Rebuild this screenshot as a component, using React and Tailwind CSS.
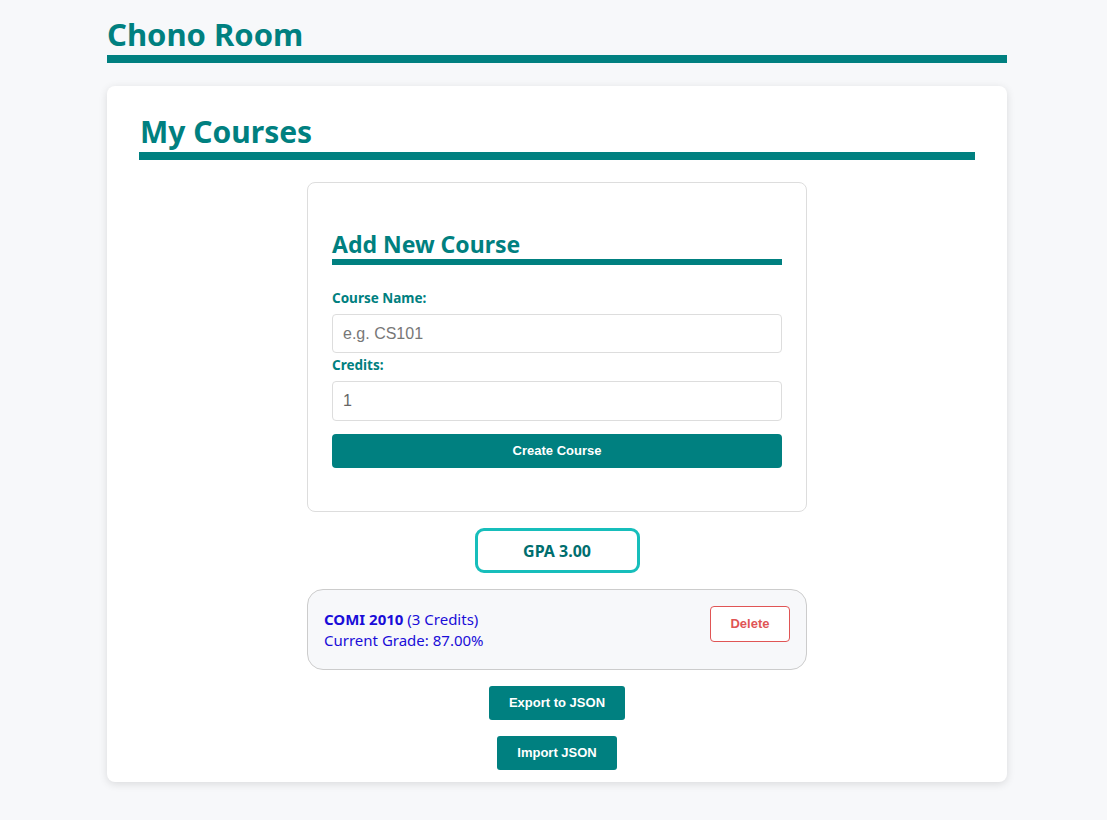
import React, { useState } from 'react';

const font = 'font-["Noto_Sans","Open_Sans",sans-serif]';
const arial = 'font-["Liberation_Sans",Arial,sans-serif]';

const App = () => {
    const [name, setName] = useState('');
    const [credits, setCredits] = useState('1');
    const courses = [{ id: 1, name: 'COMI 2010', credits: 3, grade: 87 }];

    return (
        <div className={`min-h-screen bg-[#f7f8fa] ${font}`}>
            <div className="w-[900px] ml-[107px] pt-[14px] pb-[38px]">
                <h1 className="text-[31px] leading-[40px] font-bold text-[#008080] border-b-[8px] border-[#008080] pb-[1px]">
                    Chono Room
                </h1>

                <div className="mt-[23px] bg-white rounded-lg shadow-[0_2px_8px_rgba(0,0,0,0.12)] px-8 pt-[26px] pb-[12px]">
                    <h2 className="text-[30px] leading-[40px] font-bold text-[#008080] border-b-[8px] border-[#008080] pb-0 pl-[1px]">
                        My Courses
                    </h2>

                    <div className="w-[500px] mx-auto mt-[22px] border border-[#ddd] rounded-lg px-6 pt-[46px] pb-[43px]">
                        <h3 className="text-[23px] leading-[30px] font-bold text-[#008080] border-b-[6px] border-[#008080] pb-0">
                            Add New Course
                        </h3>
                        <label className="block mt-[24px] text-[13.5px] leading-[18px] font-bold text-[#008080]">Course Name:</label>
                        <input
                            className={`block w-full mt-[7px] h-[39px] border border-[#ddd] rounded px-[10px] text-[16px] text-[#555] placeholder:text-[#777] outline-none ${arial}`}
                            placeholder="e.g. CS101"
                            value={name}
                            onChange={(e) => setName(e.target.value)}
                        />
                        <label className="block mt-[1px] text-[13.5px] leading-[23px] font-bold text-[#008080]">Credits:</label>
                        <input
                            className={`block w-full mt-[4px] h-[40px] border border-[#ddd] rounded px-[10px] text-[16px] text-[#666] outline-none ${arial}`}
                            value={credits}
                            onChange={(e) => setCredits(e.target.value)}
                        />
                        <button className={`block w-full mt-[13px] h-[34px] bg-[#008080] text-white rounded text-[13px] font-bold ${arial}`}>
                            Create Course
                        </button>
                    </div>

                    <div className="flex justify-center mt-[16px]">
                        <div className="w-[165px] h-[45px] border-[3px] border-[#17bebb] rounded-[9px] flex items-center justify-center text-[16px] font-bold text-[#006e6e]">
                            GPA 3.00
                        </div>
                    </div>

                    {courses.map((c) => (
                        <div key={c.id} className="w-[500px] mx-auto mt-[16px] h-[81px] bg-[#f7f8fa] border border-[#ccc] rounded-[16px] px-4 pt-[16px] flex items-start justify-between">
                            <div className="mt-[3px] text-[15px] leading-[21px] text-[#1a0dd8]">
                                <div><span className="font-bold">{c.name}</span> ({c.credits} Credits)</div>
                                <div>Current Grade: {c.grade.toFixed(2)}%</div>
                            </div>
                            <button className={`w-[80px] h-[36px] border border-[#e05555] rounded text-[13px] font-bold text-[#e05555] bg-white ${arial}`}>
                                Delete
                            </button>
                        </div>
                    ))}

                    <div className="flex flex-col items-center mt-[16px] gap-[16px]">
                        <button className={`w-[136px] h-[34px] bg-[#008080] text-white rounded-[3px] text-[13px] font-bold ${arial}`}>
                            Export to JSON
                        </button>
                        <button className={`w-[120px] h-[34px] bg-[#008080] text-white rounded-[3px] text-[13px] font-bold ${arial}`}>
                            Import JSON
                        </button>
                    </div>
                </div>
            </div>
        </div>
    );
};

export default App;
